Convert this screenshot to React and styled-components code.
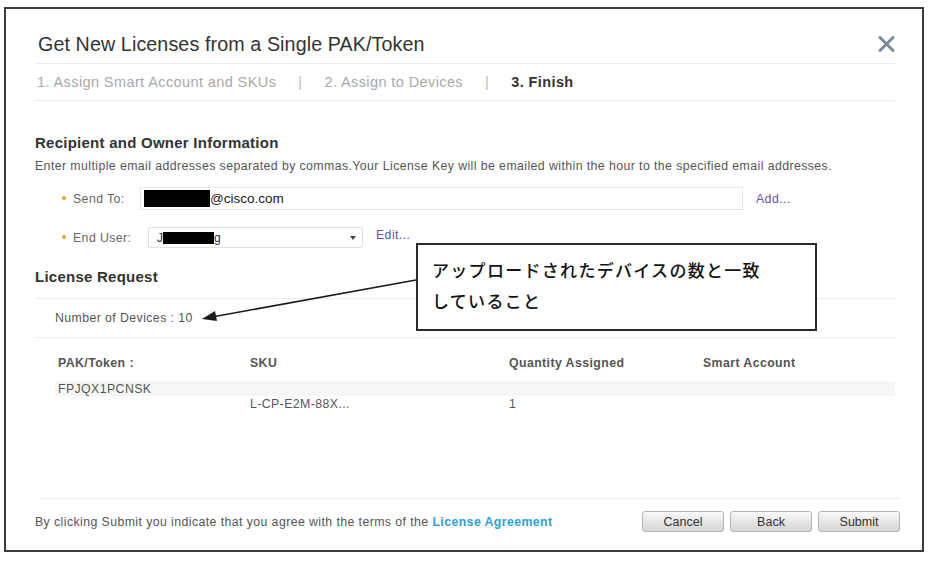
import React from "react";
import styled, { createGlobalStyle } from "styled-components";

const GlobalStyle = createGlobalStyle`
  body {
    margin: 0;
    background: #fff;
    font-family: "Liberation Sans", Arial, sans-serif;
  }
`;

const small = `
  font-size: 12.3px;
  letter-spacing: 0.42px;
`;

const Page = styled.div`
  padding: 7px 0 0 4px;
`;

const Frame = styled.div`
  position: relative;
  box-sizing: border-box;
  width: 920px;
  height: 545px;
  border: 2px solid #3a3a3a;
  padding: 0 27px 0 29px;
  display: flex;
  flex-direction: column;
  background: #fff;
`;

const Header = styled.div`
  display: flex;
  align-items: center;
  justify-content: space-between;
  padding: 25px 0 9px 3px;
  border-bottom: 1px solid #ececec;
`;

const Title = styled.h1`
  margin: 0;
  font-size: 19.7px;
  letter-spacing: 0.1px;
  line-height: 20px;
  font-weight: normal;
  color: #333;
`;

const Close = styled.span`
  display: flex;
  margin-right: 0;
  color: #7d8b98;
`;

const Steps = styled.div`
  display: flex;
  align-items: center;
  height: 36px;
  padding-left: 2px;
  gap: 22px;
  border-bottom: 1px solid #ececec;
  font-size: 14.5px;
  letter-spacing: 0.4px;
`;

const Step = styled.span`
  color: ${(p) => (p.$active ? "#333" : "#a9a9a9")};
  font-weight: ${(p) => (p.$active ? "bold" : "normal")};
`;

const Sep = styled.span`
  color: #bbb;
`;

const Body = styled.div`
  flex: 1;
  display: flex;
  flex-direction: column;
`;

const Heading = styled.h2`
  margin: ${(p) => p.$top}px 0 0;
  font-size: 15px;
  letter-spacing: 0.25px;
  line-height: 18px;
  font-weight: bold;
  color: #333;
`;

const Hint = styled.p`
  margin: 7px 0 0;
  ${small}
  line-height: 14px;
  color: #555;
`;

const FieldRow = styled.div`
  display: flex;
  align-items: center;
  margin-top: ${(p) => p.$top}px;
  padding-left: 27px;
`;

const Label = styled.span`
  width: 78px;
  flex: none;
  ${small}
  color: #666;

  &::before {
    content: "";
    display: inline-block;
    width: 4px;
    height: 4px;
    border-radius: 50%;
    background: #f0a12c;
    margin: 0 7px 2px 0;
    vertical-align: middle;
  }
`;

const TextBox = styled.div`
  box-sizing: border-box;
  width: 603px;
  height: 23px;
  border: 1px solid #e6e6e6;
  display: flex;
  align-items: center;
  padding-left: 3px;
  font-size: 13.5px;
  color: #222;
`;

const SelectBox = styled.div`
  box-sizing: border-box;
  width: 215px;
  height: 21px;
  margin-left: 8px;
  border: 1px solid #e0e0e0;
  border-radius: 2px;
  display: flex;
  align-items: center;
  padding: 0 6px 0 8px;
  font-size: 12px;
  color: #333;
`;

const Redact = styled.span`
  display: inline-block;
  width: ${(p) => p.$w}px;
  height: ${(p) => p.$h}px;
  background: #000;
`;

const Caret = styled.span`
  margin-left: auto;
  width: 0;
  height: 0;
  border-left: 3px solid transparent;
  border-right: 3px solid transparent;
  border-top: 4px solid #444;
`;

const LinkText = styled.a`
  margin-left: 13px;
  margin-top: ${(p) => p.$lift || 0}px;
  ${small}
  color: #6b4fa8;
  text-decoration: none;
`;

const Devices = styled.div`
  margin-top: 12px;
  height: 38px;
  border-top: 1px solid #ececec;
  border-bottom: 1px solid #ececec;
  display: flex;
  align-items: center;
  padding-left: 20px;
  ${small}
  color: #555;
`;

const Grid = styled.div`
  display: grid;
  grid-template-columns: 192px 259px 194px 1fr;
  padding-left: 23px;
  ${small}
  line-height: 14px;
  color: #555;
`;

const HeadGrid = styled(Grid)`
  padding-top: 18px;
  font-weight: bold;
`;

const BandGrid = styled(Grid)`
  margin-top: 11px;
  margin-left: 20px;
  padding-left: 3px;
  height: 15px;
  align-items: center;
  background: #f6f6f6;
`;

const PlainGrid = styled(Grid)`
  padding-top: 1px;
`;

const FooterRule = styled.div`
  margin: 0 -5px 0 5px;
  border-top: 1px solid #ececec;
`;

const FooterBar = styled.div`
  display: flex;
  align-items: center;
  justify-content: space-between;
  padding: 12px 0 18px;
  margin-right: -5px;
`;

const Terms = styled.p`
  margin: 0;
  ${small}
  color: #555;
`;

const Agreement = styled.a`
  color: #2ba3da;
  font-weight: bold;
  text-decoration: none;
`;

const Buttons = styled.div`
  display: flex;
  gap: 6px;
`;

const Button = styled.button`
  box-sizing: border-box;
  width: 82px;
  height: 21px;
  border: 1px solid #b4b4b4;
  border-radius: 3px;
  background: linear-gradient(#fbfbfb, #e2e2e2 60%, #d6d6d6);
  font-family: "Liberation Sans", Arial, sans-serif;
  font-size: 12.5px;
  color: #333;
  padding: 0;
`;

const Callout = styled.div`
  position: absolute;
  left: 410px;
  top: 234px;
  box-sizing: border-box;
  width: 401px;
  height: 88px;
  border: 2px solid #2a2a2a;
  background: #fff;
  padding: 9px 0 0 14px;
  font-family: "Noto Sans CJK JP", sans-serif;
  font-size: 17px;
  font-weight: 500;
  line-height: 31px;
  letter-spacing: 1.3px;
  color: #111;
`;

const ArrowLayer = styled.svg`
  position: absolute;
  left: -2px;
  top: -2px;
  pointer-events: none;
`;

export default function App() {
  return (
    <>
      <GlobalStyle />
      <Page>
        <Frame>
          <Header>
            <Title>Get New Licenses from a Single PAK/Token</Title>
            <Close>
              <svg width="17" height="16" viewBox="0 0 17 16">
                <path d="M2 1.5 L15 14.5 M15 1.5 L2 14.5" stroke="currentColor" strokeWidth="3" strokeLinecap="round" />
              </svg>
            </Close>
          </Header>
          <Steps>
            <Step>1. Assign Smart Account and SKUs</Step>
            <Sep>|</Sep>
            <Step>2. Assign to Devices</Step>
            <Sep>|</Sep>
            <Step $active>3. Finish</Step>
          </Steps>
          <Body>
            <Heading $top={33}>Recipient and Owner Information</Heading>
            <Hint>
              Enter multiple email addresses separated by commas.Your License Key will be emailed within the hour to the specified email addresses.
            </Hint>
            <FieldRow $top={14}>
              <Label>Send To:</Label>
              <TextBox>
                <Redact $w={66} $h={17} />
                @cisco.com
              </TextBox>
              <LinkText href="#">Add...</LinkText>
            </FieldRow>
            <FieldRow $top={17}>
              <Label>End User:</Label>
              <SelectBox>
                J<Redact $w={51} $h={12} />g
                <Caret />
              </SelectBox>
              <LinkText href="#" $lift={-6}>Edit...</LinkText>
            </FieldRow>
            <Heading $top={20}>License Request</Heading>
            <Devices>Number of Devices : 10</Devices>
            <HeadGrid>
              <span>PAK/Token :</span>
              <span>SKU</span>
              <span>Quantity Assigned</span>
              <span>Smart Account</span>
            </HeadGrid>
            <BandGrid>
              <span>FPJQX1PCNSK</span>
            </BandGrid>
            <PlainGrid>
              <span />
              <span>L-CP-E2M-88X...</span>
              <span>1</span>
              <span />
            </PlainGrid>
          </Body>
          <FooterRule />
          <FooterBar>
            <Terms>
              By clicking Submit you indicate that you agree with the terms of the{" "}
              <Agreement href="#">License Agreement</Agreement>
            </Terms>
            <Buttons>
              <Button>Cancel</Button>
              <Button>Back</Button>
              <Button>Submit</Button>
            </Buttons>
          </FooterBar>
          <ArrowLayer width="920" height="545">
            <line x1="412" y1="273" x2="208" y2="310" stroke="#1a1a1a" strokeWidth="1.6" />
            <polygon points="198,312 211,304 213,314" fill="#1a1a1a" />
          </ArrowLayer>
          <Callout>
            アップロードされたデバイスの数と一致
            <br />
            していること
          </Callout>
        </Frame>
      </Page>
    </>
  );
}
